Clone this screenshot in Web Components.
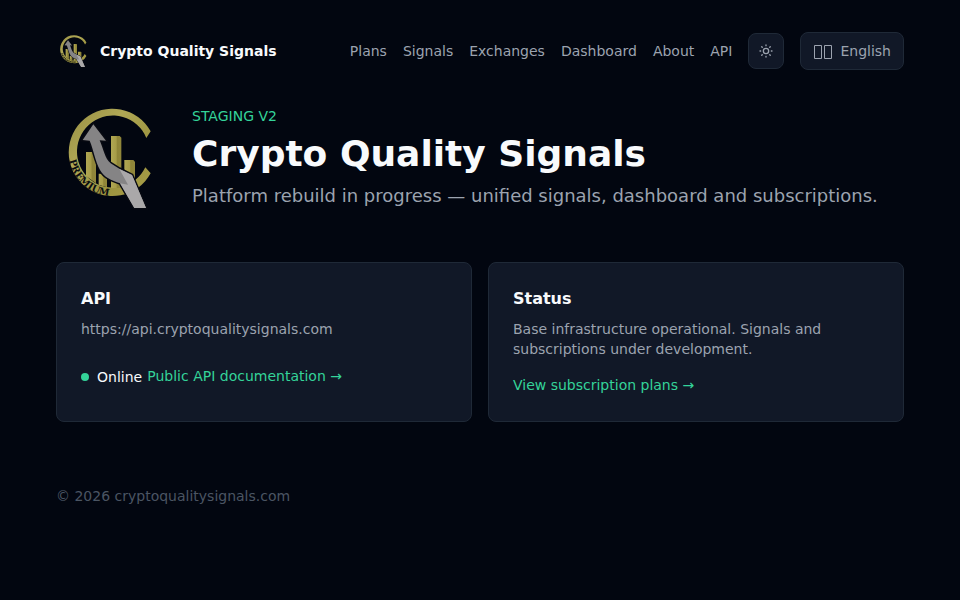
<!DOCTYPE html>
<html lang="en">
<head>
<meta charset="utf-8">
<meta name="viewport" content="width=device-width, initial-scale=1">
<title>Crypto Quality Signals</title>
<style>
    body {
        --surface: #111827;
        --line: #1f2937;
        --text: #f8fafc;
        --muted: #9ca3af;
        --accent: #34d399;
        margin: 0;
        min-height: 100vh;
        background-color: #020610;
        color: var(--text);
        font-family: "DejaVu Sans", sans-serif;
        font-size: 16px;
        line-height: 24px;
    }
</style>
</head>
<body>
<cqs-page>
    <cqs-header slot="header"></cqs-header>
    <cqs-hero>
        <span slot="eyebrow">STAGING V2</span>
        <span slot="title">Crypto Quality Signals</span>
        <span slot="lead">Platform rebuild in progress — unified signals, dashboard and subscriptions.</span>
    </cqs-hero>
    <cqs-grid>
        <cqs-card>
            <span slot="title">API</span>
            <span slot="text">https://api.cryptoqualitysignals.com</span>
            <cqs-status>Online</cqs-status>
            <cqs-link to="#docs">Public API documentation →</cqs-link>
        </cqs-card>
        <cqs-card>
            <span slot="title">Status</span>
            <span slot="text">Base infrastructure operational. Signals and subscriptions under development.</span>
            <cqs-link to="#plans">View subscription plans →</cqs-link>
        </cqs-card>
    </cqs-grid>
    <span slot="footer">© 2026 cryptoqualitysignals.com</span>
</cqs-page>

<script>
class CqsPage extends HTMLElement{
    constructor(){
        super();
        this.attachShadow({mode: "open"}).innerHTML = `
        <style>
            :host {
                display: block;
                max-width: 848px;
                margin: 0 auto;
                padding: 32px 24px;
            }

            main {
                display: grid;
                gap: 48px;
                margin-top: 32px;
            }

            footer {
                margin-top: 64px;
                color: #4b5563;
                font-size: 14px;
                line-height: 20px;
            }
        </style>
        <slot name="header"></slot>
        <main><slot></slot></main>
        <footer><slot name="footer"></slot></footer>
        `;
    }
}

class CqsLogo extends HTMLElement{
    constructor(){
        super();
        this.attachShadow({mode: "open"});
    }

    connectedCallback(){
        // the lettering is unreadable at header size, so it becomes a dark band there
        const band = this.hasAttribute("small")
            ? `<path d="M54 207A120 120 0 0 0 184 289" fill="none" stroke="#15160f" stroke-width="10" stroke-dasharray="13 6"/>`
            : `<path id="curve" d="M40 191A130 130 0 0 0 240 278" fill="none"/>
               <text font-family="DejaVu Serif, serif" font-weight="bold" font-size="29" fill="#090b10"><textPath href="#curve" startOffset="2">PREMIUM</textPath></text>`;

        this.shadowRoot.innerHTML = `
        <style>
            :host {
                display: block;
                flex: none;
                width: 112px;
                height: 112px;
            }

            :host([small]) {
                width: 36px;
                height: 36px;
            }

            svg {
                display: block;
                width: 100%;
                height: 100%;
            }
        </style>
        <svg viewBox="0 18 336 336" aria-hidden="true">
            <defs>
                <linearGradient id="gold" x1="0" y1="0" x2="1" y2="1">
                    <stop offset="0" stop-color="#968d43"/>
                    <stop offset=".35" stop-color="#b0a855"/>
                    <stop offset=".7" stop-color="#9c933f"/>
                    <stop offset="1" stop-color="#aaa04a"/>
                </linearGradient>
                <linearGradient id="bar" x1="0" y1="0" x2="1" y2="0">
                    <stop offset="0" stop-color="#b0a753"/>
                    <stop offset=".5" stop-color="#a69c48"/>
                    <stop offset=".6" stop-color="#8f8538"/>
                    <stop offset="1" stop-color="#91873b"/>
                </linearGradient>
            </defs>
            <path d="M284 106A131 131 0 1 0 284 232L268 214A108 108 0 1 1 271 126Z" fill="url(#gold)"/>
            <g fill="url(#bar)">
                <path d="M90 168H115L120 174V262L90 240Z"/>
                <path d="M128 233H148L153 238V274L128 266Z"/>
                <path d="M165 120H191L196 125V276H165Z"/>
                <path d="M205 192H232L237 197V254L205 270Z"/>
            </g>
            ${band}
            <path d="M112 85L150 134L131 133C143 160 146 188 164 202L190 218L228 237L270 336H235L192 262C166 253 144 244 132 222C117 194 113 162 101 134L80 132Z" fill="#858485" stroke="#080a12" stroke-width="9" paint-order="stroke"/>
            <path d="M190 219L228 237L270 336H235L192 262L216 266Z" fill="#aaa8a9"/>
        </svg>
        `;
    }
}

class CqsHeader extends HTMLElement{
    constructor(){
        super();
        this.attachShadow({mode: "open"}).innerHTML = `
        <style>
            :host {
                display: block;
                font-size: 14px;
                line-height: 20px;
            }

            header, nav, .brand, button {
                display: flex;
                align-items: center;
            }

            header {
                flex-wrap: wrap;
                justify-content: space-between;
                gap: 16px;
            }

            nav {
                flex-wrap: wrap;
                gap: 16px;
            }

            a {
                color: var(--muted);
                text-decoration: none;
            }

            a:hover {
                color: var(--text);
            }

            .brand {
                gap: 8px;
                color: var(--text);
                font-weight: bold;
            }

            button {
                gap: 8px;
                padding: 8px 12px;
                border: 1px solid var(--line);
                border-radius: 8px;
                background-color: var(--surface);
                color: var(--muted);
                font: inherit;
                cursor: pointer;
            }

            .theme {
                justify-content: center;
                width: 36px;
                height: 36px;
                padding: 0;
            }
        </style>
        <header>
            <a class="brand" href="#home"><cqs-logo small></cqs-logo><span>Crypto Quality Signals</span></a>
            <nav>
                <a href="#plans">Plans</a>
                <a href="#signals">Signals</a>
                <a href="#exchanges">Exchanges</a>
                <a href="#dashboard">Dashboard</a>
                <a href="#about">About</a>
                <a href="#api">API</a>
                <button class="theme" type="button" aria-label="Toggle theme">
                    <svg width="16" height="16" viewBox="0 0 24 24" fill="none" stroke="currentColor" stroke-width="2" stroke-linecap="round" aria-hidden="true">
                        <circle cx="12" cy="12" r="4"/>
                        <path d="M12 3v1M12 20v1M5.64 5.64l.7.7M17.66 17.66l.7.7M3 12h1M20 12h1M6.34 17.66l-.7.7M18.36 5.64l-.7.7"/>
                    </svg>
                </button>
                <button type="button">
                    <svg width="19" height="16" viewBox="0 0 19 16" fill="none" stroke="currentColor" aria-hidden="true">
                        <path d="M1.5 2.5h7v13h-7zM11.5 2.5h7v13h-7z"/>
                    </svg>
                    <span>English</span>
                </button>
            </nav>
        </header>
        `;
    }
}

class CqsHero extends HTMLElement{
    constructor(){
        super();
        this.attachShadow({mode: "open"}).innerHTML = `
        <style>
            :host {
                display: flex;
                align-items: center;
                gap: 24px;
            }

            .copy {
                display: grid;
                gap: 8px;
            }

            p, h1 {
                margin: 0;
            }

            .eyebrow {
                color: var(--accent);
                font-size: 14px;
                line-height: 20px;
            }

            h1 {
                font-size: 36px;
                line-height: 40px;
            }

            .lead {
                color: var(--muted);
                font-size: 18px;
                line-height: 28px;
            }
        </style>
        <cqs-logo></cqs-logo>
        <div class="copy">
            <p class="eyebrow"><slot name="eyebrow"></slot></p>
            <h1><slot name="title"></slot></h1>
            <p class="lead"><slot name="lead"></slot></p>
        </div>
        `;
    }
}

class CqsGrid extends HTMLElement{
    constructor(){
        super();
        this.attachShadow({mode: "open"}).innerHTML = `
        <style>
            :host {
                display: grid;
                grid-template-columns: 1fr 1fr;
                gap: 16px;
            }

            @media screen and (max-width: 640px){
                :host {
                    grid-template-columns: 1fr;
                }
            }
        </style>
        <slot></slot>
        `;
    }
}

class CqsCard extends HTMLElement{
    constructor(){
        super();
        this.attachShadow({mode: "open"}).innerHTML = `
        <style>
            :host {
                display: block;
                padding: 24px;
                border: 1px solid var(--line);
                border-radius: 8px;
                background-color: var(--surface);
            }

            h2 {
                margin: 0 0 8px;
                font-size: 16px;
                line-height: 24px;
            }

            p {
                margin: 0;
                color: var(--muted);
                font-size: 14px;
                line-height: 20px;
            }
        </style>
        <h2><slot name="title"></slot></h2>
        <p><slot name="text"></slot></p>
        <slot></slot>
        `;
    }
}

class CqsStatus extends HTMLElement{
    constructor(){
        super();
        this.attachShadow({mode: "open"}).innerHTML = `
        <style>
            :host {
                display: inline-flex;
                align-items: center;
                gap: 8px;
                margin-top: 28px;
                font-size: 14px;
                line-height: 20px;
            }

            i {
                width: 8px;
                height: 8px;
                border-radius: 50%;
                background-color: var(--accent);
            }
        </style>
        <i></i><slot></slot>
        `;
    }
}

class CqsLink extends HTMLElement{
    constructor(){
        super();
        this.attachShadow({mode: "open"}).innerHTML = `
        <style>
            :host {
                display: inline-block;
                margin-top: 16px;
                font-size: 14px;
                line-height: 20px;
            }

            a {
                color: var(--accent);
                text-decoration: none;
            }

            a:hover {
                text-decoration: underline;
            }
        </style>
        <a><slot></slot></a>
        `;
    }

    connectedCallback(){
        this.shadowRoot.querySelector("a").href = this.getAttribute("to");
    }
}

customElements.define("cqs-page", CqsPage);
customElements.define("cqs-logo", CqsLogo);
customElements.define("cqs-header", CqsHeader);
customElements.define("cqs-hero", CqsHero);
customElements.define("cqs-grid", CqsGrid);
customElements.define("cqs-card", CqsCard);
customElements.define("cqs-status", CqsStatus);
customElements.define("cqs-link", CqsLink);
</script>
</body>
</html>
